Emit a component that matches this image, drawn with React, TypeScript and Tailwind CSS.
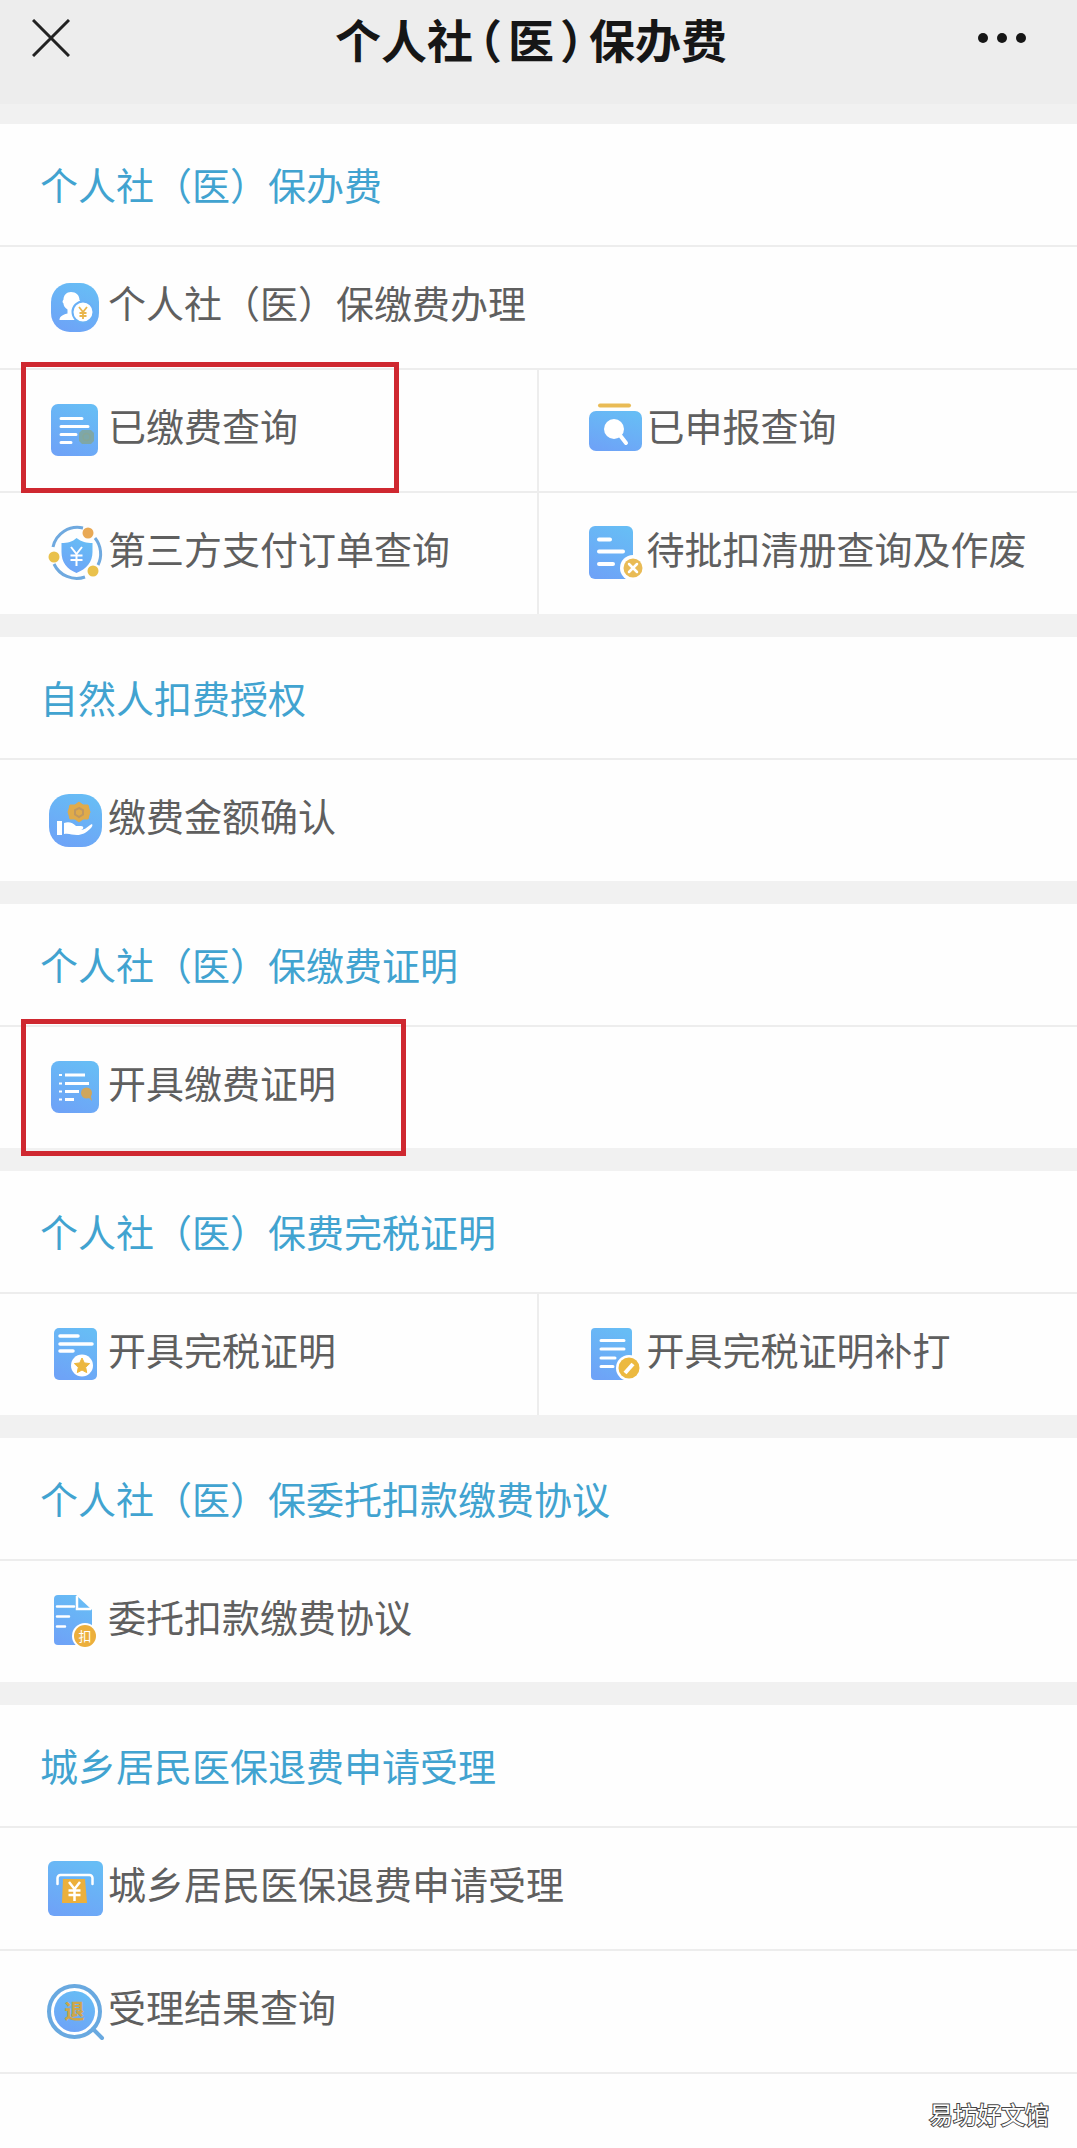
import type { ReactNode } from "react";

type IconName =
    | "person"
    | "paid"
    | "declared"
    | "shield"
    | "voidList"
    | "hand"
    | "proof"
    | "taxStar"
    | "taxPen"
    | "agreement"
    | "refund"
    | "result";

interface Item {
    label: string;
    icon: IconName;
    // frame drawn over the row to point the reader at it
    mark?: string;
}

interface Section {
    title: string;
    rows: Item[][];
}

const sections: Section[] = [
    {
        title: "个人社（医）保办费",
        rows: [
            [{ label: "个人社（医）保缴费办理", icon: "person" }],
            [
                { label: "已缴费查询", icon: "paid", mark: "-top-2 -bottom-0.5 w-[378px]" },
                { label: "已申报查询", icon: "declared" },
            ],
            [
                { label: "第三方支付订单查询", icon: "shield" },
                { label: "待批扣清册查询及作废", icon: "voidList" },
            ],
        ],
    },
    {
        title: "自然人扣费授权",
        rows: [[{ label: "缴费金额确认", icon: "hand" }]],
    },
    {
        title: "个人社（医）保缴费证明",
        rows: [[{ label: "开具缴费证明", icon: "proof", mark: "-top-2 -bottom-2 w-[385px]" }]],
    },
    {
        title: "个人社（医）保费完税证明",
        rows: [
            [
                { label: "开具完税证明", icon: "taxStar" },
                { label: "开具完税证明补打", icon: "taxPen" },
            ],
        ],
    },
    {
        title: "个人社（医）保委托扣款缴费协议",
        rows: [[{ label: "委托扣款缴费协议", icon: "agreement" }]],
    },
    {
        title: "城乡居民医保退费申请受理",
        rows: [
            [{ label: "城乡居民医保退费申请受理", icon: "refund" }],
            [{ label: "受理结果查询", icon: "result" }],
        ],
    },
];

const BLUE = "url(#icon-blue)";

// all icons share a 60x60 box
const iconShapes: Record<IconName, ReactNode> = {
    person: (
        <>
            <rect x="6" y="6" width="48" height="49" rx="19" fill={BLUE} />
            <path d="M26 15c5 0 8.500 3 8.500 8 1.500 1 1 3-.5 4-5 2-7 6-6 11l2 5H14.500c0-3 2-5 8-6.500v-4c-3-2-4-4-4-6-1.500-1-1-3 0-4 0-4 3-7.500 7.500-7.500z" fill="#fff" />
            <circle cx="38" cy="35" r="10.500" fill="#fff" stroke="#69b0f6" strokeWidth="2" />
            <path d="M34 30l4 5 4-5M38 35v7M34.500 36h7M34.500 39h7" stroke="#e9b64c" strokeWidth="1.800" fill="none" />
        </>
    ),
    paid: (
        <>
            <rect x="6" y="4" width="47" height="52" rx="7" fill={BLUE} />
            <path d="M16 18.500h21M16 26.500h27M16 34.500h15M16 42.500h10" stroke="#fff" strokeWidth="3" strokeLinecap="round" />
            <path d="M34 33l3-3h9l3 3v8l-3 3h-9l-3-3z" fill="#7ea7a8" />
            <circle cx="41.500" cy="37" r="3.500" fill="none" stroke="#86a698" strokeWidth="1.500" />
        </>
    ),
    declared: (
        <>
            <path d="M16 5.500h29" stroke="#e9bb55" strokeWidth="4" strokeLinecap="round" />
            <rect x="5" y="11" width="53" height="40" rx="7" fill={BLUE} />
            <circle cx="30" cy="29" r="10" fill="#fff" />
            <path d="M35 34l7 9" stroke="#fff" strokeWidth="4" strokeLinecap="round" />
        </>
    ),
    shield: (
        <>
            <path d="M8 24A25 25 0 0 1 38 5M50 15a25 25 0 0 1 3 27M40 54A25 25 0 0 1 9 41" fill="none" stroke="#6fa9df" strokeWidth="3" />
            <path d="M31.500 15c5 4 10 5 16 5v9c0 10-6 17-16 21-10-4-15-11-15-21v-9c6 0 11-1 15-5z" fill={BLUE} />
            <path d="M26 24l5.500 7 5.500-7M31.500 31v12M25.500 32.500h12M25.500 37h12" fill="none" stroke="#fff" strokeWidth="2" />
            <circle cx="43" cy="10" r="5.500" fill="#e9a955" />
            <circle cx="9" cy="34" r="5.500" fill="#e9c14c" />
            <circle cx="48" cy="48" r="5.500" fill="#e9c14c" />
        </>
    ),
    voidList: (
        <>
            <rect x="5" y="3" width="44" height="53" rx="6" fill={BLUE} />
            <path d="M15 16.500h11M15 28.500h24M15 41h14" stroke="#fff" strokeWidth="4" strokeLinecap="round" />
            <circle cx="49" cy="45" r="13" fill="#fff" />
            <circle cx="49" cy="45" r="9.500" fill="#e9bb55" />
            <path d="M45 41l8 8M53 41l-8 8" stroke="#fff" strokeWidth="2.500" strokeLinecap="round" />
        </>
    ),
    hand: (
        <>
            <rect x="4" y="4" width="53" height="53" rx="20" fill={BLUE} />
            <path d="M34 12l4 3h5l1 4 1 3-1 3-1 4h-5l-4 3-4-3h-5l-1-4-1-3 1-3 1-4h5z" fill="#e0ab4a" stroke="#e0ab4a" strokeWidth="1" strokeLinejoin="round" />
            <path d="M34 18l4 2v4.500l-4 2.500-4-2.500V20z" fill="none" stroke="#c09860" strokeWidth="2" />
            <path d="M12 31h5v14h-5zM19 33c5-2 9 0 12 3h5c3 0 3 3 0 4 4 0 7-4 11-6 1 1 0 3-1 4-5 5-9 7-14 7-5 0-8-2-13-1z" fill="#fff" />
        </>
    ),
    proof: (
        <>
            <rect x="6" y="4" width="48" height="52" rx="8" fill={BLUE} />
            <path d="M20 18h20M20 26.500h24M20 34.500h14M20 42.500h9" stroke="#fff" strokeWidth="3" />
            <path d="M14 18h3M14 26.500h3M14 34.500h3M14 42.500h3" stroke="#fff" strokeWidth="2" />
            <circle cx="41.500" cy="36" r="5.500" fill="#cfa65c" />
            <path d="M41 38l6 6-2-8z" fill="#cfa65c" />
        </>
    ),
    taxStar: (
        <>
            <rect x="9" y="4" width="43" height="52" rx="5" fill={BLUE} />
            <path d="M15 12h18M15 20h32M15 27h13" stroke="#fff" strokeWidth="3.500" strokeLinecap="round" />
            <circle cx="37" cy="41.500" r="11" fill="#fff" />
            <path d="M37 34l2.300 4.900 5.300.7-3.900 3.700 1 5.300-4.700-2.600-4.700 2.600 1-5.300-3.900-3.700 5.300-.7z" fill="#ecb73f" stroke="#ecb73f" strokeLinejoin="round" />
        </>
    ),
    taxPen: (
        <>
            <rect x="7" y="4" width="41" height="52" rx="4" fill={BLUE} />
            <path d="M17 16.500h23M17 25h23M17 34h14M17 42.500h12" stroke="#fff" strokeWidth="3" strokeLinecap="round" />
            <circle cx="45" cy="44" r="13" fill="#fff" />
            <circle cx="45" cy="44" r="10.500" fill="#ecb940" />
            <path d="M41 49l8-9" stroke="#fff" strokeWidth="4" />
        </>
    ),
    agreement: (
        <>
            <path d="M13 4h18l16 15v35H13a4 4 0 0 1-4-4V8a4 4 0 0 1 4-4z" fill={BLUE} />
            <path d="M32 5v13h14" fill="none" stroke="#fff" strokeWidth="2.500" />
            <path d="M12 15.500h17M12 25.500h12M12 35.500h8" stroke="#fff" strokeWidth="2.500" strokeLinecap="round" />
            <circle cx="40" cy="45" r="13" fill="#fff" />
            <circle cx="40" cy="45" r="11" fill="#ecaf3c" />
            <text x="40" y="50" fontSize="13" textAnchor="middle" fill="#fff">扣</text>
        </>
    ),
    refund: (
        <>
            <rect x="3" y="3" width="55" height="55" rx="6" fill={BLUE} />
            <path d="M12.500 26v-6a3 3 0 0 1 3-3h29a3 3 0 0 1 3 3v6" fill="none" stroke="#fff" strokeWidth="2.500" strokeLinecap="round" />
            <path d="M18 21h22l2 24-25 0z" fill="#ecb03c" />
            <path d="M24 24l5.500 7 5.500-7M29.500 31v12M23.500 32.500h12M23.500 37h12" fill="none" stroke="#fff" strokeWidth="2.500" />
        </>
    ),
    result: (
        <>
            <circle cx="29.500" cy="30.500" r="25.500" fill="#fff" stroke="#69a9e0" strokeWidth="4" />
            <circle cx="29.500" cy="30.500" r="20.500" fill={BLUE} />
            <path d="M48 48l9 9" stroke="#69a9e0" strokeWidth="4" strokeLinecap="round" />
            <text x="29.500" y="38" fontSize="20" fontWeight="900" textAnchor="middle" fill="#cda64c">退</text>
        </>
    ),
};

function ItemIcon({ name }: { name: IconName }) {
    return (
        <svg viewBox="0 0 60 60" className="size-[60px] shrink-0" aria-hidden="true">
            {iconShapes[name]}
        </svg>
    );
}

function ItemLink({ item }: { item: Item }) {
    return (
        <a href="#" className="relative flex h-[121px] items-center pb-0.5 pl-[45px] not-last:border-r-2 not-last:border-[#ededed]">
            <ItemIcon name={item.icon} />
            <span className="pb-2.5 pl-[3px] text-[38px] leading-[48px] whitespace-nowrap">{item.label}</span>
            {item.mark && (
                <span className={`pointer-events-none absolute left-[21px] z-10 border-5 border-[#cf2830] ${item.mark}`} />
            )}
        </a>
    );
}

function Header() {
    return (
        <header className="bg-[#ededed] pb-7">
            <div className="flex h-[76px] items-center justify-between pr-[47px] pl-8">
                <button type="button" aria-label="关闭" className="w-14">
                    <svg viewBox="0 0 38 38" className="size-[38px]" fill="none" stroke="#222" strokeWidth="3">
                        <path d="M1 1l36 36M37 1L1 37" />
                    </svg>
                </button>
                {/* half-width brackets keep the title compact */}
                <h1 className="text-[46px] leading-[60px] font-bold text-[#161616] [font-feature-settings:'halt']">
                    个人社<span className="mx-1.5">（</span>医<span className="mx-1.5">）</span>保办费
                </h1>
                <button type="button" aria-label="更多" className="flex w-14 justify-center gap-[9px]">
                    <span className="size-2.5 rounded-full bg-[#161616]" />
                    <span className="size-2.5 rounded-full bg-[#161616]" />
                    <span className="size-2.5 rounded-full bg-[#161616]" />
                </button>
            </div>
        </header>
    );
}

export default function App() {
    return (
        <div className="min-h-screen bg-[#fefefe] font-['Noto_Sans_CJK_SC',sans-serif] text-[#5f5f5f]">
            <svg className="absolute size-0" aria-hidden="true">
                <linearGradient id="icon-blue" x1="0.7" y1="0" x2="0.3" y2="1">
                    <stop offset="0" stopColor="#67bdf5" />
                    <stop offset="1" stopColor="#6ea3f7" />
                </linearGradient>
            </svg>
            <Header />
            <main className="flex flex-col gap-[23px] bg-[#f1f1f1] pt-5">
                {sections.map((section) => (
                    <section key={section.title} className="bg-[#fefefe]">
                        <h2 className="flex h-[121px] items-center pb-0.5 pl-10 text-[38px] leading-[48px] text-[#41a3d0]">
                            {section.title}
                        </h2>
                        {section.rows.map((row) => (
                            <div
                                key={row[0].label}
                                className={`grid border-t-2 border-[#ededed] ${row.length > 1 ? "grid-cols-2" : "grid-cols-1"}`}
                            >
                                {row.map((item) => (
                                    <ItemLink key={item.label} item={item} />
                                ))}
                            </div>
                        ))}
                    </section>
                ))}
            </main>
            <footer className="border-t-2 border-[#ededed] pt-[22px] pr-7 text-right text-2xl leading-9 text-white [-webkit-text-stroke:2px_#444] [paint-order:stroke]">
                易坊好文馆
            </footer>
        </div>
    );
}
